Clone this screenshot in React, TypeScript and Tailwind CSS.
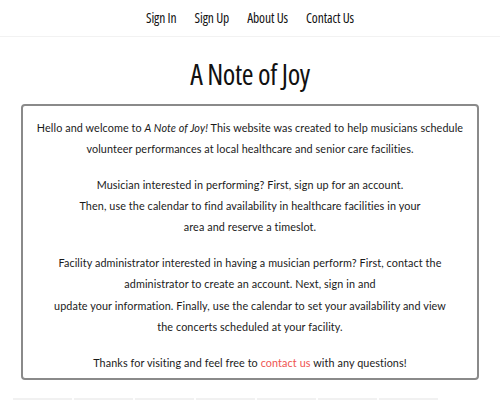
import React from "react";

export default function App() {
  const cond = "[font-family:'Open_Sans',sans-serif] [font-stretch:75%]";
  return (
    <div className="w-[500px] h-[400px] overflow-hidden bg-white text-[#111]">
      <nav className={`h-[37px] border-b border-[#f2f2f2] flex items-center justify-center gap-[18px] text-[13.5px] font-medium tracking-[-0.1px] ${cond}`}>
        <span>Sign In</span>
        <span>Sign Up</span>
        <span>About Us</span>
        <span>Contact Us</span>
      </nav>
      <h1 className={`text-center text-[28.5px] leading-none mt-[23px] font-medium tracking-[-0.4px] ${cond}`}>A Note of Joy</h1>
      <div className="mx-[21px] mt-[15px] border-2 border-[#8a8a8a] rounded-[4px] h-[276px] pt-[11px] text-center text-[10.8px] leading-[21.3px] text-[#1a1a1a] [font-family:Lato,sans-serif] tracking-[0.1px]">
        <p>
          Hello and welcome to <i>A Note of Joy!</i> This website was created to help musicians schedule
          <br />
          volunteer performances at local healthcare and senior care facilities.
        </p>
        <p className="mt-[14.5px]">
          Musician interested in performing? First, sign up for an account.
          <br />
          Then, use the calendar to find availability in healthcare facilities in your
          <br />
          area and reserve a timeslot.
        </p>
        <p className="mt-[14.5px]">
          Facility administrator interested in having a musician perform? First, contact the
          <br />
          administrator to create an account. Next, sign in and
          <br />
          update your information. Finally, use the calendar to set your availability and view
          <br />
          the concerts scheduled at your facility.
        </p>
        <p className="mt-[14.5px]">
          Thanks for visiting and feel free to <span className="text-[#ef5350]">contact us</span> with any questions!
        </p>
      </div>
      <div className="mt-[18px] ml-[13px] flex gap-[2px]">
        {[0, 1, 2, 3, 4, 5, 6].map((i) => (
          <div key={i} className="w-[59px] h-[4px] bg-[#f1f1f1]" />
        ))}
      </div>
    </div>
  );
}
